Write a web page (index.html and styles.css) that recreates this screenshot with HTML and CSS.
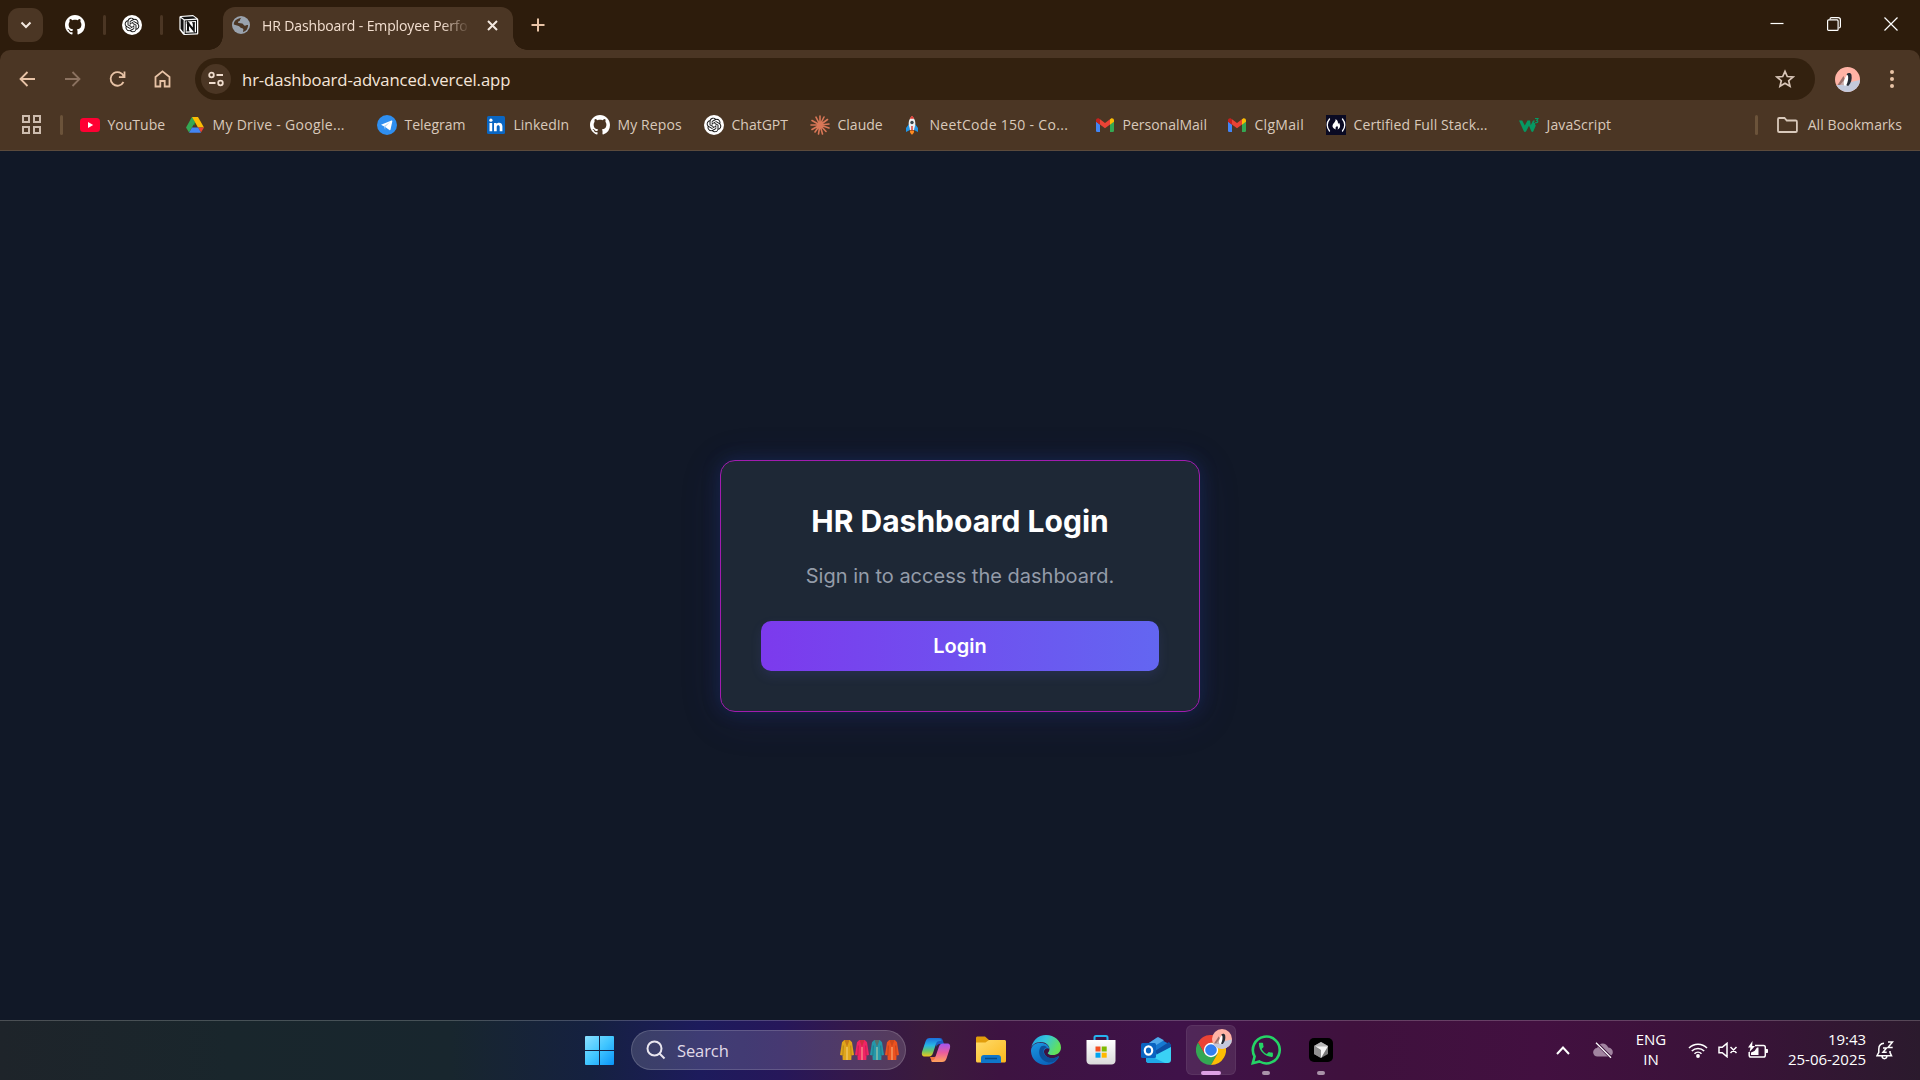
FILE: index.html
```html
<!DOCTYPE html>
<html lang="en">
<head>
<meta charset="utf-8">
<title>HR Dashboard - Employee Performance</title>
<link rel="stylesheet" href="styles.css">
</head>
<body>
<svg class="defs" width="0" height="0" aria-hidden="true">
  <defs>
    <linearGradient id="gWin" x1="0" y1="0" x2="1" y2="1"><stop offset="0" stop-color="#8be0ff"/><stop offset=".5" stop-color="#41c6ff"/><stop offset="1" stop-color="#0a94f8"/></linearGradient>
    <linearGradient id="gCopA" x1="0" y1="0" x2="0" y2="1"><stop offset="0" stop-color="#1b6fdc"/><stop offset=".4" stop-color="#27b5e6"/><stop offset=".7" stop-color="#69c667"/><stop offset="1" stop-color="#f2c51d"/></linearGradient>
    <linearGradient id="gCopB" x1="0" y1="0" x2="0" y2="1"><stop offset="0" stop-color="#a055f0"/><stop offset=".5" stop-color="#ea5c9c"/><stop offset="1" stop-color="#ffa35a"/></linearGradient>
    <linearGradient id="gFold" x1="0" y1="0" x2="1" y2="1"><stop offset="0" stop-color="#ffdb6b"/><stop offset="1" stop-color="#fbb81c"/></linearGradient>
    <linearGradient id="gEdgeA" x1="0" y1="0" x2="1" y2=".4"><stop offset="0" stop-color="#1c9de0"/><stop offset=".5" stop-color="#35c6dc"/><stop offset="1" stop-color="#62e05a"/></linearGradient>
    <linearGradient id="gEdgeB" x1="0" y1="0" x2=".6" y2="1"><stop offset="0" stop-color="#1b97e0"/><stop offset="1" stop-color="#0a62bb"/></linearGradient>
    <linearGradient id="gStore" x1="0" y1="0" x2="0" y2="1"><stop offset="0" stop-color="#fff"/><stop offset="1" stop-color="#dadada"/></linearGradient>
    <clipPath id="cAvatar"><circle cx="12.5" cy="12.5" r="12.5"/></clipPath>
    <symbol id="github" viewBox="0 0 16 16"><path fill="#fff" d="M8 0C3.58 0 0 3.58 0 8c0 3.54 2.29 6.53 5.47 7.59.4.07.55-.17.55-.38 0-.19-.01-.82-.01-1.49-2.01.37-2.53-.49-2.69-.94-.09-.23-.48-.94-.82-1.13-.28-.15-.68-.52-.01-.53.63-.01 1.08.58 1.23.82.72 1.21 1.87.87 2.33.66.07-.52.28-.87.51-1.07-1.78-.2-3.64-.89-3.64-3.95 0-.87.31-1.59.82-2.15-.08-.2-.36-1.02.08-2.12 0 0 .67-.21 2.2.82.64-.18 1.32-.27 2-.27s1.36.09 2 .27c1.53-1.04 2.2-.82 2.2-.82.44 1.1.16 1.92.08 2.12.51.56.82 1.27.82 2.15 0 3.07-1.87 3.75-3.65 3.95.29.25.54.73.54 1.48 0 1.07-.01 1.93-.01 2.2 0 .21.15.46.55.38A8.01 8.01 0 0 0 16 8c0-4.42-3.58-8-8-8z"/></symbol>
    <symbol id="openai" viewBox="0 0 36 36"><circle cx="18" cy="18" r="18" fill="#fff"/><path transform="translate(4.800 4.800) scale(1.100)" fill="#111" d="M22.2819 9.8211a5.9847 5.9847 0 0 0-.5157-4.9108 6.0462 6.0462 0 0 0-6.5098-2.9A6.0651 6.0651 0 0 0 4.9807 4.1818a5.9847 5.9847 0 0 0-3.9977 2.9 6.0462 6.0462 0 0 0 .7427 7.0966 5.98 5.98 0 0 0 .511 4.9107 6.051 6.051 0 0 0 6.5146 2.9001A5.9847 5.9847 0 0 0 13.2599 24a6.0557 6.0557 0 0 0 5.7718-4.2058 5.9894 5.9894 0 0 0 3.9977-2.9001 6.0557 6.0557 0 0 0-.7475-7.0729zm-9.022 12.6081a4.4755 4.4755 0 0 1-2.8764-1.0408l.1419-.0804 4.7783-2.7582a.7948.7948 0 0 0 .3927-.6813v-6.7369l2.02 1.1686a.071.071 0 0 1 .038.052v5.5826a4.504 4.504 0 0 1-4.4945 4.4944zm-9.6607-4.1254a4.4708 4.4708 0 0 1-.5346-3.0137l.142.0852 4.783 2.7582a.7712.7712 0 0 0 .7806 0l5.8428-3.3685v2.3324a.0804.0804 0 0 1-.0332.0615L9.74 19.9502a4.4992 4.4992 0 0 1-6.1408-1.6464zM2.3408 7.8956a4.485 4.485 0 0 1 2.3655-1.9728V11.6a.7664.7664 0 0 0 .3879.6765l5.8144 3.3543-2.0201 1.1685a.0757.0757 0 0 1-.071 0l-4.8303-2.7865A4.504 4.504 0 0 1 2.3408 7.872zm16.5963 3.8558L13.1038 8.364 15.1192 7.2a.0757.0757 0 0 1 .071 0l4.8303 2.7913a4.4944 4.4944 0 0 1-.6765 8.1042v-5.6772a.79.79 0 0 0-.407-.667zm2.0107-3.0231l-.142-.0852-4.7735-2.7818a.7759.7759 0 0 0-.7854 0L9.409 9.2297V6.8974a.0662.0662 0 0 1 .0284-.0615l4.8303-2.7866a4.4992 4.4992 0 0 1 6.6802 4.66zM8.3065 12.863l-2.02-1.1638a.0804.0804 0 0 1-.038-.0567V6.0742a4.4992 4.4992 0 0 1 7.3757-3.4537l-.142.0805L8.704 5.459a.7948.7948 0 0 0-.3927.6813zm1.0976-2.3654l2.602-1.4998 2.6069 1.4998v2.9994l-2.5974 1.4997-2.6067-1.4997Z"/></symbol>
    <symbol id="gmail" viewBox="0 0 20 20"><path fill="#4285f4" d="M1 6.5 5 9.500V17H2.300A1.300 1.300 0 0 1 1 15.700z"/><path fill="#34a853" d="M19 6.500 15 9.500V17h2.700a1.300 1.300 0 0 0 1.300-1.300z"/><path fill="#ea4335" d="M5 4.300 10 8l5-3.700v5.200L10 13.200 5 9.500z"/><path fill="#c5221f" d="M1 5.300v1.400l4 3V4.300l-.8-.6C2.900 2.700 1 3.700 1 5.300z"/><path fill="#fbbc04" d="M19 5.300v1.400l-4 3V4.300l.8-.6c1.300-1 3.200 0 3.200 1.600z"/></symbol>
    <symbol id="avatar" viewBox="0 0 25 25"><g clip-path="url(#cAvatar)"><path fill="#ffb3a5" d="M0 0h25v25H0z"/><path fill="#c3c9db" d="M0 18.500 25 13v12H0z"/><path fill="#9c716b" d="M2.500 18 8.500 9l4 9z"/><path fill="#c9aba8" d="m5 18 5-6 2 6z"/><path fill="#fff" d="M12 8c-2.500 3-4 7-3 10.500l3.500.3 1-10.800z"/><path fill="#262c35" d="M11.500 7.200C13 5.500 16 5.500 16.500 8c.6 4-.1 7.500-3 10.700-1 .4-2.300-.2-2-1C13 14.500 13.600 11.500 13 8.700z"/></g></symbol>
    <symbol id="coat" viewBox="0 0 14 22"><path fill="currentColor" d="M4.200 1h5.600l2.200 2.300 2 12.700-2.500.6-.2 4.400H2.700l-.2-4.400L0 16 2 3.300z"/><path stroke="#000" stroke-opacity=".18" d="M3.300 6.500 2.800 17M10.700 6.500l.5 10.500" fill="none"/><path stroke="#ffe6a8" stroke-opacity=".6" stroke-width="1.200" d="M7 8v13" fill="none"/><path fill="#a33a12" fill-opacity=".4" d="M4.500 1h5L7 8z"/></symbol>
  </defs>
</svg>

<header class="browser">
  <div class="tabstrip">
    <button class="tab-search"><svg width="12" height="12" viewBox="0 0 12 12"><path class="line-white" d="m1.500 3.500 4.500 4.500 4.500-4.500"/></svg></button>
    <div class="pinned">
      <svg class="fav"><use href="#github"/></svg><i class="sep"></i>
      <svg class="fav"><use href="#openai"/></svg><i class="sep"></i>
      <svg class="fav" viewBox="0 0 20 20"><path fill="#fff" d="M1.500.9 14 0l4.500 3.200c.5.400.8.900.8 1.500v13.600c0 .8-.5 1.300-1.300 1.300L5.300 20c-.6 0-1-.2-1.400-.7L.8 15.300C.5 14.900.4 14.500.4 14V2.200C.4 1.400.8 1 1.500.9z"/><path fill="#111" d="M2.300 2.100 14 1.300l3.200 2.300-11.800.7zM1.600 3l3 2.100v12.400l-3-3.700z"/><path fill="#111" d="M5.700 5.500 18 4.800v13.400l-12.300.7z"/><path fill="#fff" d="M6.700 6.500 17 5.900v11.300l-10.300.6z"/><path fill="none" stroke="#111" stroke-width="2" d="M9 16V8.200l5.800 7.200V7.600"/><path stroke="#111" d="M7.500 8h3M7.500 15.900h3M13 7.800h3.200"/></svg>
    </div>
    <div class="tab">
      <svg width="18" height="18" viewBox="0 0 18 18"><circle cx="9" cy="9" r="9" fill="#9aa3ae"/><path fill="#4b3624" d="M9.500 1.700C7.500 2.700 8.700 4.700 7 5.200c-1.200.3-1.500 1.500-.2 1.900l3.400.3c1.500.3 1.200 2 2.600 2.300 1.200.2 1.900-1 3.300-.6a7.300 7.300 0 0 1-5 7c-.5-1.500.8-2.200.1-3.200-.8-1.200-3-.7-3.500-2.200-.4-1-2.400-1.300-5.900-2.300 0-2.700 1.400-5.500 7.700-6.700z"/></svg>
      <span class="tab-title">HR Dashboard - Employee Perfo</span>
      <svg class="tab-close" width="11" height="11" viewBox="0 0 11 11"><path class="line-white" d="m1 1 9 9m0-9-9 9"/></svg>
    </div>
    <svg class="new-tab" width="14" height="14" viewBox="0 0 14 14"><path d="M7 .5v13M.5 7h13"/></svg>
    <div class="win-controls">
      <svg width="14" height="14" viewBox="0 0 14 14"><path d="M.5 6.500h13"/></svg>
      <svg width="14" height="14" viewBox="0 0 14 14"><rect x=".6" y="2.900" width="10.500" height="10.500" rx="1"/><path d="M3 2.500V2C3 1 3.600.6 4.500.6h6.700c1.500 0 2.200.8 2.200 2.200v6.700c0 .9-.4 1.500-1.700 1.500"/></svg>
      <svg width="14" height="14" viewBox="0 0 14 14"><path d="m.5.5 13 13m0-13-13 13"/></svg>
    </div>
  </div>

  <div class="toolbar">
    <div class="nav">
      <svg viewBox="0 0 20 20"><path d="M17.500 10H3.500M10 3l-7 7 7 7"/></svg>
      <svg class="dim" viewBox="0 0 20 20"><path d="M2.500 10h14M10 3l7 7-7 7"/></svg>
      <svg viewBox="0 0 20 20"><path d="M16 13a6.800 6.800 0 1 1 .3-5.500M17 2.500v5.600h-5.600"/></svg>
      <svg viewBox="0 0 20 20"><path d="M3 8v9.500h4.800V12h4.400v5.500H17V8l-7-5.700z"/></svg>
    </div>
    <div class="omnibox">
      <span class="site-info"><svg width="16" height="16" viewBox="0 0 16 16"><circle cx="3.500" cy="4" r="2.300"/><path d="M8.500 4H15M1 12h6.500"/><circle cx="12.500" cy="12" r="2.300"/></svg></span>
      <span class="url">hr-dashboard-advanced.vercel.app</span>
      <svg class="star" width="20" height="20" viewBox="0 0 20 20"><path d="m10 2.300 2.300 5.200 5.700.5-4.300 3.700 1.300 5.600-5-3-5 3 1.300-5.600L2 8l5.700-.5z"/></svg>
    </div>
    <svg class="avatar"><use href="#avatar"/></svg>
    <svg class="kebab" width="6" height="20" viewBox="0 0 6 20"><circle cx="3" cy="3" r="2"/><circle cx="3" cy="10" r="2"/><circle cx="3" cy="17" r="2"/></svg>
  </div>

  <nav class="bookmarks">
    <svg class="apps" width="19" height="19" viewBox="0 0 19 19"><path d="M1 1h6v6H1zM12 1h6v6h-6zM1 12h6v6H1zM12 12h6v6h-6z"/></svg>
    <i class="sep"></i>
    <ul class="links">
      <li><svg viewBox="0 0 20 20"><rect y="3" width="20" height="14" rx="3.500" fill="#ff0033"/><path fill="#fff" d="m8 7 5.200 3L8 13z"/></svg><span>YouTube</span></li>
      <li><svg viewBox="0 0 20 20"><path fill="#188038" d="M7 2h3v8.500L6.600 8.700 5.200 5z"/><path fill="#34a853" d="M7 2 1 12.500 4 17.500 10 7.300z"/><path fill="#fbbc04" d="M7 2h6l6 10.500h-6z"/><path fill="#ea4335" d="M13 12.500h6l-3 5z"/><path fill="#4285f4" d="M4 17.800 7 12.500h6.200l2.800 5.300z"/></svg><span class="wide">My Drive - Google...</span></li>
      <li><svg viewBox="0 0 20 20"><circle cx="10" cy="10" r="10" fill="#2f8ff0"/><path fill="#fff" d="m4 9.700 10.500-4.200c.6-.2 1 .1.8.9l-1.800 8.200c-.1.600-.6.800-1.100.4L8.200 12z"/><path fill="#b9d9f5" d="m7 11 6-3.900-4.700 4.800-.2 3z"/></svg><span>Telegram</span></li>
      <li><svg viewBox="0 0 20 20"><rect x="1" y="1" width="18" height="18" rx="1.500" fill="#0a66c2"/><path fill="#fff" d="M3.500 8h2.700v8.300H3.500zM8 8h2.600v1.200c.9-2 5.800-2.200 5.800 2.100v5h-2.700v-4.500c0-2.200-3-2-3 0v4.500H8z"/><circle cx="4.900" cy="5.200" r="1.600" fill="#fff"/></svg><span>LinkedIn</span></li>
      <li><svg><use href="#github"/></svg><span class="roomy">My Repos</span></li>
      <li><svg><use href="#openai"/></svg><span>ChatGPT</span></li>
      <li><svg viewBox="0 0 20 20"><path stroke="#d97757" stroke-width="1.600" stroke-linecap="round" d="M10 10V1M10 10l4-8M10 10l7.500-5.500M10 10l9-1M10 10l9 3M10 10l6 6.500M10 10l2.500 9M10 10l-1.500 9M10 10l-5 7M10 10l-8 4.500M10 10H1M10 10 2 5.500M10 10 6 2.200"/></svg><span>Claude</span></li>
      <li><svg viewBox="0 0 20 20"><path fill="#2297e8" d="m7 9-3 4v4l4-2zm6 0 3 4v4l-4-2z"/><path fill="#eceff1" d="M10 1c3 2.500 4 6.500 3 10l-1 4H8l-1-4c-1-3.500 0-7.500 3-10z"/><path fill="#e33b32" d="M10 .8c1 .9 1.800 2 2.200 3H7.800c.4-1 1.200-2.100 2.200-3z"/><circle cx="10" cy="7.500" r="1.700" fill="#37474f"/><path fill="#ff8b20" d="M8 15.500h4c.4 2-.8 3.500-2 4.300-1.200-.8-2.400-2.300-2-4.300z"/><path fill="#d93127" d="M9.300 11h1.400v4.500H9.300z"/></svg><span class="wide">NeetCode 150 - Co...</span></li>
      <li><svg><use href="#gmail"/></svg><span>PersonalMail</span></li>
      <li><svg><use href="#gmail"/></svg><span class="wide">ClgMail</span></li>
      <li><svg viewBox="0 0 20 20"><path fill="#0a0a23" d="M0 0h20v20H0z"/><path fill="none" stroke="#fff" stroke-width="1.300" stroke-linecap="round" d="M3.500 4c-3 3.500-3 8.500 0 12M16.500 4c3 3.500 3 8.500 0 12"/><path fill="#fff" d="M9.500 4c3 1.700 2 3.700 3 4.700.5-.3.500-.7.400-1.200 1.800 3 1.700 5.500-1.400 7 1-2 .3-3-.6-3.800-.1 1.300-1.200 1-1.400 2-.1.700.1 1.200.6 1.800-3.500-1-4.600-3.400-2.600-6 1.200-1.500 2.500-2.700 2-4.500z"/></svg><span class="roomy">Certified Full Stack...</span></li>
      <li><svg viewBox="0 0 20 20"><path fill="#059862" d="M0 5.500h3.200l2.600 5 2.700-5h2.600l.6 4.800 2.300-4.800h1.800l1 5-2.300 5.500c-.7 1.300-1.700 1.300-2.300 0L10 10.700 7.300 16c-.7 1.300-2 1.300-2.600 0z"/><path fill="none" stroke="#4b3624" stroke-width="4" d="M16.500 4h3l-1.300 2c1.800.1 1.500 2.800-1.500 2"/><path fill="none" stroke="#059862" stroke-width="1.200" d="M16 3.500h3l-1.300 2c1.800.1 1.500 2.800-1.500 2"/></svg><span class="roomy">JavaScript</span></li>
    </ul>
    <i class="sep"></i>
    <div class="all-bookmarks">
      <svg width="21" height="16" viewBox="0 0 21 16"><path d="M1 14V2.200C1 1.500 1.500 1 2.200 1h5.300l2.300 2.500h8.900c.7 0 1.200.5 1.200 1.200V14c0 .6-.5 1-1.200 1H2.200C1.500 15 1 14.600 1 14z"/></svg>
      <span>All Bookmarks</span>
    </div>
  </nav>
</header>

<main class="page">
  <section class="card">
    <h1>HR Dashboard Login</h1>
    <p>Sign in to access the dashboard.</p>
    <button class="login">Login</button>
  </section>
</main>

<footer class="taskbar">
  <div class="dock">
    <div class="app"><svg width="29" height="29" viewBox="0 0 29 29"><path fill="url(#gWin)" d="M1 0h13v14H0V1a1 1 0 0 1 1-1zM15 0h13a1 1 0 0 1 1 1v13H15zM0 15h14v14H1a1 1 0 0 1-1-1zM15 15h14v13a1 1 0 0 1-1 1H15z"/></svg></div>
    <div class="search">
      <svg width="20" height="20" viewBox="0 0 20 20"><circle cx="8.500" cy="8.500" r="7"/><path d="m13.500 13.500 5 5"/></svg>
      <span>Search</span>
      <div class="coats"><svg class="c1"><use href="#coat"/></svg><svg class="c2"><use href="#coat"/></svg><svg class="c3"><use href="#coat"/></svg><svg class="c4"><use href="#coat"/></svg></div>
    </div>
    <div class="app"><svg width="30" height="30" viewBox="0 0 30 30"><path fill="#1b5cc4" d="M14 3h5c2 0 2.500 1.500 3 3l1 3h-4c-2 0-3 1-3.500 3z"/><path fill="#f2743e" d="m11 27-2-5h4c2 0 3-1 3.500-3L17 27z"/><path fill="url(#gCopA)" d="M9 3h8c2 0 3 1 3.500 3h-2c-2 0-3 1-3.500 3l-3 9c-.7 2-1.700 3.500-4 3.500H4c-3 0-3.500-2-3-4.500L4.500 6.500C5.300 4 6.500 3 9 3z"/><path fill="url(#gCopB)" d="M21 27h-8c-1.500 0-2.500-.4-3-1.500 2.500 0 3.500-1 4-2.500l4-11.500C18.700 9.500 20 8.500 22 8.500h4c3 0 3.500 2 3 4.500l-3.500 10.500C24.700 26 23.500 27 21 27z"/></svg></div>
    <div class="app"><svg width="30" height="28" viewBox="0 0 30 28"><path fill="#e29d0b" d="M0 2C0 1 .7.500 1.500.500H9l4 3.500H28v6H0z"/><path fill="url(#gFold)" d="M0 6.500h9.500L13 4h15.500c.8 0 1.500.7 1.500 1.500V25c0 .8-.7 1.500-1.500 1.500H1.500C.7 26.500 0 25.800 0 25z"/><path fill="#0f76c9" d="M5 27v-5c0-1.700 1.200-3 3-3h14c1.800 0 3 1.300 3 3v5z"/><path stroke="#074a86" stroke-width="1.500" d="M9 22.500h12"/></svg></div>
    <div class="app"><svg width="30" height="30" viewBox="0 0 30 30"><path fill="url(#gEdgeB)" d="M0 15C1 10 5 7.500 10 7.800c5 .3 8 3.200 8.500 6.200-2-1.700-5-.7-5.500 2-.5 4 4 8 9 7.500 2.500-.3 4-1.500 5.500-2.200.4 0 .6.300.4.700C25.500 27 20.500 30 15 30 6.500 30-.4 23.500 0 15z"/><path fill="#0d4e99" d="M10 11.500c-4 5-1.500 14.500 7.500 16 4 .5 7.500-1.500 9.800-5.200.3-.6-.1-1-.6-.8-6.700 3.500-13.700.5-14.200-5-.1-2.500 1.500-3.700 3.500-4-1-1.500-4-2.300-6-1z"/><path fill="url(#gEdgeA)" d="M0 14.500C.7 6 7 0 15 0c8.500 0 15 6 15 12.500 0 5-4 7.500-8 7.500-3.500 0-5.500-1.300-5.200-2 .3-.7 1.700-1.500 1.700-4 0-3.500-3.500-7-9-7C5 7-.2 10 0 14.500z"/></svg></div>
    <div class="app"><svg width="30" height="30" viewBox="0 0 30 30"><path fill="none" stroke="#26b3ef" stroke-width="2" d="M8.500 6V2.500C8.500 1.500 9 1 10 1h10c1 0 1.500.5 1.500 1.500V6"/><path fill="url(#gStore)" d="M.5 5h29v20.500c0 2.500-1.800 4-4 4h-21c-2.200 0-4-1.500-4-4z"/><path fill="#f25022" d="M9.500 11.500h5v5h-5z"/><path fill="#7fba00" d="M15.700 11.500h5v5h-5z"/><path fill="#00a4ef" d="M9.500 17.700h5v5h-5z"/><path fill="#ffb900" d="M15.700 17.700h5v5h-5z"/></svg></div>
    <div class="app"><svg width="30" height="28" viewBox="0 0 30 28"><path fill="#1679d1" d="M5 9 16 1.500 30 9v10H5z"/><path fill="#50a9ea" d="M8 6.900 17 1l6 3.200L12 11z"/><path fill="#0c4fa5" d="m14 15 14-9 2 3v2L17 20z"/><path fill="#3ad1f5" d="M30 11v13c0 2-1.300 3-3 3H8c-2 0-3-1.300-3-3z"/><path fill="#1fa8e8" d="M5 18 24 27H8c-2 0-3-1.300-3-3z"/><rect y="7" width="15" height="15" rx="1.500" fill="#0a64c1"/><ellipse cx="7.500" cy="14.500" rx="3.700" ry="4.100" fill="none" stroke="#fff" stroke-width="2.200"/></svg></div>
    <div class="app active"><svg width="30" height="30" viewBox="0 0 30 30"><path fill="#ea4335" d="M2 7.500A15 15 0 0 1 28 7.500H15L8.500 18.800z"/><path fill="#34a853" d="M2 7.500A15 15 0 0 0 15 30l6.500-11.200-13 0z"/><path fill="#fbbc04" d="M15 30A15 15 0 0 0 28 7.500H15l6.500 11.300z"/><circle cx="15" cy="15" r="7.200" fill="#fff"/><circle cx="15" cy="15" r="5.800" fill="#317ff0"/></svg><svg class="badge"><use href="#avatar"/></svg><i class="ind"></i></div>
    <div class="app"><svg width="30" height="30" viewBox="0 0 30 30"><path fill="none" stroke="#25d366" stroke-width="2.600" d="M1.800 28.200 3.600 21.500A13.400 13.400 0 1 1 8.500 26.500z"/><path fill="#25d366" transform="matrix(.78 0 0 .78 5.500 5.500)" d="M6.620 10.790c1.440 2.830 3.760 5.140 6.590 6.590l2.200-2.200c.27-.27.67-.36 1.020-.24 1.120.37 2.330.57 3.570.57.55 0 1 .45 1 1V20c0 .55-.45 1-1 1-9.390 0-17-7.610-17-17 0-.55.45-1 1-1h3.500c.55 0 1 .45 1 1 0 1.250.2 2.450.57 3.570.11.35.03.74-.25 1.020l-2.200 2.200z"/></svg><i class="ind small"></i></div>
    <div class="app"><svg width="24" height="24" viewBox="0 0 24 24"><rect width="24" height="24" rx="5" fill="#000"/><path fill="#777" d="m12 4 7 4v8l-7 4-7-4V8z"/><path fill="#b5b5b5" d="m5 8 7-4 7 4z"/><path fill="#909090" d="m5 8 7 4.500V20l-7-4z"/><path fill="#f2f2f2" d="M6 8.300h13L12 20v-8z"/></svg><i class="ind small"></i></div>
  </div>
  <div class="tray">
    <svg class="chev" width="14" height="9" viewBox="0 0 14 9"><path d="m1 8 6-6.500L13 8"/></svg>
    <svg class="cloud" width="20" height="17" viewBox="0 0 20 17"><path fill="#a184a0" d="M4.500 14.500a4.200 4.200 0 0 1-.3-8.400C5.500 1 12.500-.5 15.300 5.600c6 .6 6 8.700.2 8.900z"/><path stroke="#3d123c" stroke-width="3" d="m3.500 1 15 15"/><path stroke="#fff" stroke-width="1.300" d="m3 .8 15 15"/></svg>
    <div class="lang"><span>ENG</span><span>IN</span></div>
    <svg class="wifi" width="20" height="16" viewBox="0 0 20 16"><path d="M1 6a12.700 12.700 0 0 1 18 0M3.800 9a8.800 8.800 0 0 1 12.400 0M6.500 11.700a5 5 0 0 1 7 0"/><circle cx="10" cy="14" r="1.900"/></svg>
    <svg class="vol" width="20" height="16" viewBox="0 0 20 16"><path d="M1 5.300h3.200L9 1.300v13.400l-4.800-4H1zM12.500 5l6 6m0-6-6 6"/></svg>
    <svg class="batt" width="20" height="18" viewBox="0 0 20 18"><path class="o" d="M7 4.500h8.500c1 0 1.800.8 1.800 1.800v8c0 1-.8 1.800-1.800 1.800H3c-1 0-1.800-.8-1.800-1.800V11"/><path class="f" d="M9 6.500h1.500V14H3v-2.500L6.500 10zM17.500 8H19c.6 0 1 .4 1 1v2c0 .6-.4 1-1 1h-1.500zM4.500 0 0 6.500h2.500L1.500 11 7 5H4.200z"/></svg>
    <div class="clock"><span>19:43</span><span>25-06-2025</span></div>
    <svg class="bell" width="18" height="19" viewBox="0 0 18 19"><path d="M8 2.200C4.500 2.500 2.800 5 2.800 8v3.300L1 14.700h14.500L14 11.500V10M6 15c.3 3.500 4.500 3.500 5 0"/><path d="M7 7h3.500L7 11.300h3.700M12 1h4.500L12 6.500h4.700"/></svg>
  </div>
</footer>
</body>
</html>
```
FILE: styles.css
```css
* { box-sizing: border-box; }

body {
  margin: 0;
  width: 1920px;
  height: 1080px;
  overflow: hidden;
  display: flex;
  flex-direction: column;
  background: #111827;
  font-family: "Open Sans", "Noto Sans", sans-serif;
}

svg { display: block; flex: none; fill: none; }
.defs { position: absolute; }
button { border: 0; padding: 0; font: inherit; color: inherit; }
ul { list-style: none; margin: 0; padding: 0; }
span { white-space: nowrap; }

/* Browser chrome */
.browser {
  height: 151px;
  background: #2d1c0c;
  color: #d9c9bb;
  flex: none;
}

.tabstrip { height: 50px; display: flex; align-items: center; padding-left: 8px; }

.tab-search {
  width: 35px;
  height: 34px;
  border-radius: 11px;
  background: #4b3624;
  display: grid;
  place-items: center;
}

.line-white { stroke: #f3e8df; stroke-width: 2; }

.pinned { display: flex; align-items: center; margin-left: 22px; }
.fav { width: 20px; height: 20px; }
.sep { width: 3px; height: 20px; border-radius: 2px; background: #4b3624; flex: none; }
.pinned .sep { margin: 0 16px 0 18px; }

.tab {
  position: relative;
  align-self: flex-end;
  width: 290px;
  height: 43px;
  margin-left: 24px;
  padding: 0 15px 7px 9px;
  border-radius: 12px 12px 0 0;
  background: #4b3624;
  display: flex;
  align-items: center;
}

.tab::before, .tab::after {
  content: "";
  position: absolute;
  bottom: 0;
  width: 14px;
  height: 14px;
}
.tab::before { left: -14px; background: radial-gradient(circle at 0 0, transparent 13.5px, #4b3624 14px); }
.tab::after { right: -14px; background: radial-gradient(circle at 100% 0, transparent 13.5px, #4b3624 14px); }

.tab-title {
  width: 212px;
  margin-left: 12px;
  font-size: 14px;
  letter-spacing: -0.13px;
  color: #f3dfd0;
  -webkit-mask-image: linear-gradient(90deg, #000 180px, transparent 208px);
  mask-image: linear-gradient(90deg, #000 180px, transparent 208px);
}
.tab-close { margin-left: auto; }

.new-tab { margin-left: 18px; stroke: #e8c3a6; stroke-width: 2; }

.win-controls {
  margin-left: auto;
  display: flex;
  gap: 43px;
  padding: 0 22px 2px 0;
  stroke: #fff;
  stroke-width: 1.2;
}

.toolbar {
  height: 58px;
  display: flex;
  align-items: center;
  padding: 0 25px 0 5px;
  border-radius: 10px 10px 0 0;
  background: #4b3624;
}

.nav { display: flex; }
.nav svg {
  width: 45px;
  height: 20px;
  stroke: #e8c3a6;
  stroke-width: 1.8;
}
.nav .dim { stroke: #8b7260; }

.omnibox {
  width: 1620px;
  height: 42px;
  margin-left: 10px;
  padding: 0 20px 0 6px;
  border-radius: 21px;
  background: #33210f;
  display: flex;
  align-items: center;
}
.site-info {
  width: 30px;
  height: 30px;
  border-radius: 50%;
  background: #4b3624;
  display: grid;
  place-items: center;
}
.site-info svg { stroke: #f0ddce; stroke-width: 1.8; }
.url { margin-left: 11px; font-size: 16.7px; letter-spacing: -0.1px; color: #f6e6da; }
.star { margin-left: auto; stroke: #d9c6b8; stroke-width: 1.7; }
.avatar { width: 25px; height: 25px; margin-left: 20px; }
.kebab { margin-left: auto; fill: #e8c3a6; }

.bookmarks {
  height: 43px;
  padding: 0 18px 9px 22px;
  background: #4b3624;
  border-bottom: 1px solid #5b4a3c;
  display: flex;
  align-items: center;
  font-size: 14px;
}
.apps { stroke: #cdbcae; stroke-width: 2; }
.bookmarks .sep { background: #6b533a; }
.bookmarks .apps + .sep { margin-left: 19px; }
.links {
  flex: 1;
  margin-left: 17px;
  display: grid;
  grid-template-columns: 105px 192px 109px 104px 114px 106px 92px 193px 132px 99px 193px 110px;
}
.links li { display: flex; align-items: center; gap: 7.5px; min-width: 0; }
.links svg { width: 20px; height: 20px; }
.wide { letter-spacing: 0.3px; }
.roomy { letter-spacing: 0.12px; }
.all-bookmarks { display: flex; align-items: center; gap: 10px; margin-left: 19px; letter-spacing: 0.08px; }
.all-bookmarks svg { stroke: #d9c9bb; stroke-width: 1.8; }

/* Page */
.page { flex: 1; display: grid; place-items: center; padding-top: 1px; }
.card {
  width: 480px;
  height: 252px;
  padding: 40px;
  border: 1px solid #a21caf;
  border-radius: 15px;
  background: #1e2836;
  box-shadow: 0 0 18px rgba(30, 64, 150, .3), 0 6px 40px rgba(49, 46, 129, .2);
  font-family: Inter, sans-serif;
  text-align: center;
}
.card h1 { margin: 0; font-size: 30px; line-height: 40px; font-weight: 700; color: #fff; }
.card p { margin: 20px 0 30px; font-size: 20px; line-height: 30px; color: #949ca9; }
.login {
  display: block;
  width: 100%;
  height: 50px;
  border-radius: 10px;
  background: linear-gradient(90deg, #7c3aed, #6366f1);
  box-shadow: 0 5px 12px rgba(99, 102, 241, .12);
  color: #fff;
  font-size: 20px;
  font-weight: 600;
}

/* Taskbar */
.taskbar {
  flex: none;
  height: 60px;
  border-top: 1px solid rgba(255, 255, 255, .2);
  background: linear-gradient(90deg, #1e242a 0, #19262c 230px, #18262e 450px, #152140 590px, #1d1b5c 700px, #26175a 780px, #34184b 850px, #3b1b3c 930px, #3d1341 1000px, #3f1249 1180px, #3f113d 1350px, #421040 1540px, #391338 1740px, #2b1a2d 1920px);
  background-origin: border-box;
  color: #fff;
  display: flex;
  justify-content: space-between;
  padding: 0 26px 1px 574px;
}
.dock { display: flex; align-items: center; gap: 5px; }
.app {
  position: relative;
  width: 50px;
  height: 50px;
  display: grid;
  place-items: center;
}
.active { border-radius: 6px; background: rgba(255, 255, 255, .09); border: 1px solid rgba(255, 255, 255, .06); }
.badge { position: absolute; right: 3px; top: 3px; width: 20px; height: 20px; }
.ind { position: absolute; left: 50%; bottom: 0; width: 20px; height: 4px; margin-left: -10px; border-radius: 2px; background: #dda0e5; }
.active .ind { bottom: -1px; }
.ind.small { width: 8px; margin-left: -4px; background: #a993a9; }

.search {
  width: 275px;
  height: 40px;
  padding: 0 6px 0 14px;
  border: 1px solid rgba(255, 255, 255, .16);
  border-radius: 20px;
  background: rgba(255, 255, 255, .15);
  display: flex;
  align-items: center;
  font-size: 16.5px;
  color: #e0dae8;
  margin: 0 0 0 2px;
}
.search > svg { stroke: #e9e6ef; stroke-width: 2; }
.search span { margin-left: 11px; letter-spacing: -0.1px; }
.coats { display: flex; gap: 1px; margin-left: auto; }
.coats svg { width: 14px; height: 22px; }
.c1 { color: #e0a51b; }
.c2 { color: #ef2465; }
.c3 { color: #2597a9; }
.c4 { color: #ec5220; }

.tray { display: flex; align-items: center; font-size: 15px; line-height: 20px; }
.chev { stroke: #fff; stroke-width: 2; }
.cloud { margin-left: 23px; }
.lang { width: 40px; margin-left: 18px; padding-bottom: 2px; display: flex; flex-direction: column; align-items: center; }
.wifi { margin-left: 17px; stroke: #fff; stroke-width: 1.6; }
.wifi circle { fill: #fff; stroke: none; }
.vol { margin-left: 10px; stroke: #fff; stroke-width: 1.5; }
.batt { margin-left: 10px; }
.batt .o { stroke: #fff; stroke-width: 1.5; }
.batt .f { fill: #fff; }
.clock { width: 98px; padding-bottom: 3px; display: flex; flex-direction: column; align-items: flex-end; letter-spacing: -0.03px; }
.bell { margin-left: 10px; stroke: #fff; stroke-width: 1.5; }
```
